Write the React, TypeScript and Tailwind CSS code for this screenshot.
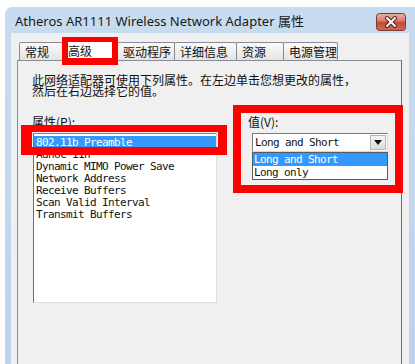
import React from "react";

const tabs = [
  { label: "常规", w: "w-[44px]", selected: false },
  { label: "高级", w: "w-[56px]", selected: true },
  { label: "驱动程序", w: "w-[58px]", selected: false },
  { label: "详细信息", w: "w-[63px]", selected: false },
  { label: "资源", w: "w-[48px]", selected: false },
  { label: "电源管理", w: "w-[55px]", selected: false },
];

const properties = [
  "802.11b Preamble",
  "Adhoc 11n",
  "Dynamic MIMO Power Save",
  "Network Address",
  "Receive Buffers",
  "Scan Valid Interval",
  "Transmit Buffers",
];

const CloseButton = () => (
  <svg width="30" height="18" viewBox="0 0 30 18">
    <defs>
      <linearGradient id="cb" x1="0" y1="0" x2="0" y2="1">
        <stop offset="0" stopColor="#eab0a4" />
        <stop offset="0.45" stopColor="#d87a6a" />
        <stop offset="0.5" stopColor="#c4493a" />
        <stop offset="1" stopColor="#d06a55" />
      </linearGradient>
    </defs>
    <rect x="0.5" y="0.5" width="29" height="17" rx="3" fill="url(#cb)" stroke="#7b3a32" />
    <path d="M11 5 L19 13 M19 5 L11 13" stroke="#4b2420" strokeWidth="4" strokeLinecap="round" />
    <path d="M11 5 L19 13 M19 5 L11 13" stroke="#ffffff" strokeWidth="2" strokeLinecap="round" />
  </svg>
);

const mono = "font-['DejaVu_Sans_Mono',monospace] text-[11px] tracking-[-0.62px]";

export default function App() {
  return (
    <div className="relative h-[364px] w-[415px] overflow-hidden bg-white pl-[5px] pt-[7px] font-['Noto_Sans_CJK_SC',sans-serif] text-[#111]">
      <div className="flex h-full flex-col rounded-tl-[7px] bg-gradient-to-b from-[#c8dcf0] to-[#bcd3ea]">
        {/* title bar */}
        <div className="flex h-[26px] shrink-0 justify-between pl-[10px] pr-[9px]">
          <span className="mt-[5px] font-['Noto_Sans','Noto_Sans_CJK_SC',sans-serif] text-[13px] leading-[18px] text-[#1a1a1a]">
            Atheros AR1111 Wireless Network Adapter 属性
          </span>
          <div className="pt-[6px]">
            <CloseButton />
          </div>
        </div>

        {/* client area */}
        <div className="mx-[6px] flex flex-1 flex-col bg-[#f0f0f0] pl-[6px] pr-[7px] pt-[9px]">
          <div className="flex h-[18px] pl-[2px]">
            {tabs.map((t, i) => (
              <div
                key={t.label}
                className={`${t.w} ${i > 0 ? "-ml-px" : ""} flex items-center rounded-t-[2px] border border-b-0 border-[#898c95] pl-[5px] text-[12px] leading-[12px] ${
                  t.selected ? "relative z-10 -mt-[2px] h-[21px] bg-white" : "bg-gradient-to-b from-[#fafafa] to-[#e4e4e4]"
                }`}
              >
                {t.label}
              </div>
            ))}
          </div>

          <div className="flex-1 border border-b-0 border-[#898c95] border-r-[#6d6d6d] bg-[#f0f0f0] pl-[14px] pt-[13px]">
            <div className="text-[12px] leading-[11px]">
              <p>此网络适配器可使用下列属性。在左边单击您想更改的属性，</p>
              <p>然后在右边选择它的值。</p>
            </div>

            <div className="mt-[20px] flex">
              <div className="w-[186px]">
                <div className="text-[12px] leading-[12px]">属性(P):</div>
                <div className="ml-[1px] mt-[5px] h-[170px] w-[184px] border border-b-[#dcdcdc] border-l-[#6f6f6f] border-r-[#dcdcdc] border-t-[#828282] bg-white pt-[2px]">
                  {properties.map((p, i) => (
                    <div
                      key={p}
                      className={`h-[12px] pl-[2px] leading-[13px] ${mono} ${i === 0 ? "bg-[#3399ff] text-white" : ""}`}
                    >
                      {p}
                    </div>
                  ))}
                </div>
              </div>

              <div className="ml-[30px]">
                <div className="text-[12px] leading-[12px]">值(V):</div>
                <div className="ml-[4px] mt-[5px] w-[136px]">
                  <div className="flex h-[19px] items-center justify-between border border-b-[#d8d8d8] border-l-[#7a7a7a] border-r-[#d8d8d8] border-t-[#7a7a7a] bg-white pl-[2px] pr-[1px]">
                    <span className={`${mono} leading-[15px]`}>Long and Short</span>
                    <div className="flex h-[15px] w-[16px] items-center justify-center border border-[#b5b5b5] bg-gradient-to-b from-[#f4f4f4] to-[#dedede]">
                      <svg width="8" height="5" viewBox="0 0 8 5">
                        <path d="M0 0 H8 L4 5 Z" fill="#111" />
                      </svg>
                    </div>
                  </div>
                  <div className="border border-[#5a5a5a] bg-white">
                    <div className={`h-[13px] pl-[1px] leading-[14px] ${mono} bg-[#3399ff] text-white`}>Long and Short</div>
                    <div className={`h-[13px] pl-[1px] leading-[14px] ${mono}`}>Long only</div>
                  </div>
                </div>
              </div>
            </div>
          </div>
        </div>
      </div>

      {/* red annotation boxes */}
      <div className="pointer-events-none absolute left-[62px] top-[37px] z-20 h-[28px] w-[56px] border-b-[7px] border-l-[6px] border-r-[6px] border-t-[5px] border-[#ff0000]" />
      <div className="pointer-events-none absolute left-[21px] top-[125px] z-20 h-[30px] w-[206px] border-b-[8px] border-l-[11px] border-r-[9px] border-t-[7px] border-[#ff0000]" />
      <div className="pointer-events-none absolute left-[233px] top-[105px] z-20 h-[88px] w-[170px] border-[8px] border-[#ff0000]" />
    </div>
  );
}
